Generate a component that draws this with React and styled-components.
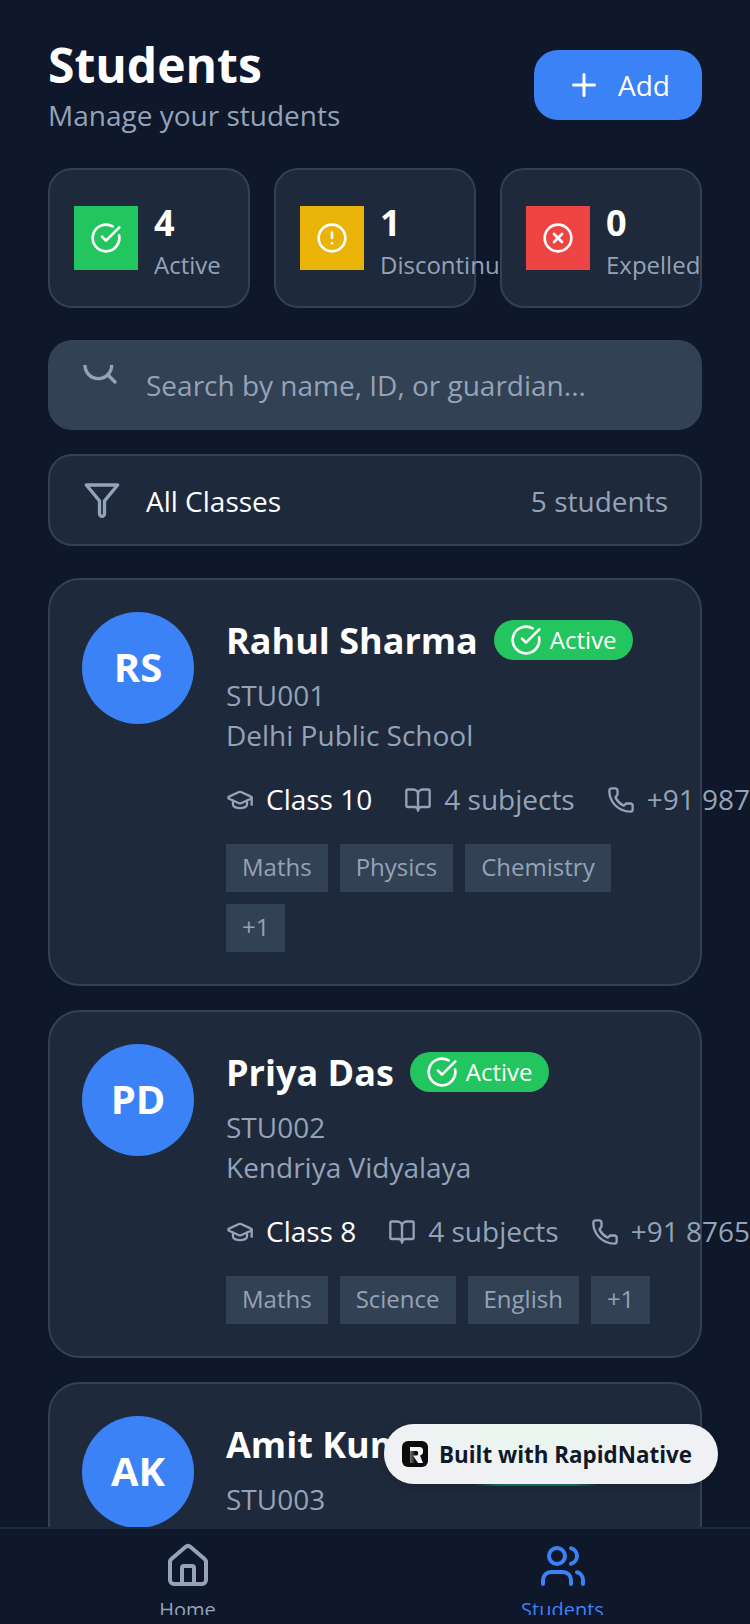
import React from "react";
import styled, { createGlobalStyle } from "styled-components";
import {
  BookOpen,
  CircleAlert,
  CircleCheckBig,
  CircleX,
  GraduationCap,
  House,
  Phone,
  Plus,
  Search,
  Users
} from "lucide-react";

const GlobalStyle = createGlobalStyle`
  html, body {
    margin: 0;
    padding: 0;
    background: #0f172a;
  }
  * {
    box-sizing: border-box;
  }
`;

const stats = [
  { count: 4, label: "Active", color: "#22c55e", Icon: CircleCheckBig },
  { count: 1, label: "Discontinued", color: "#eab308", Icon: CircleAlert },
  { count: 0, label: "Expelled", color: "#ef4444", Icon: CircleX }
];

const students = [
  {
    initials: "RS",
    name: "Rahul Sharma",
    id: "STU001",
    school: "Delhi Public School",
    grade: "Class 10",
    phone: "+91 98765 43210",
    tags: ["Maths", "Physics", "Chemistry", "+1"]
  },
  {
    initials: "PD",
    name: "Priya Das",
    id: "STU002",
    school: "Kendriya Vidyalaya",
    grade: "Class 8",
    phone: "+91 87654 32109",
    tags: ["Maths", "Science", "English", "+1"]
  },
  {
    initials: "AK",
    name: "Amit Kumar",
    id: "STU003",
    school: "St. Xavier's School",
    grade: "Class 12",
    phone: "+91 76543 21098",
    tags: ["Maths", "Physics", "Biology", "+1"]
  }
];

// lucide's funnel has a lopsided stem, the one in the design is symmetric
const FunnelIcon = () => (
  <svg
    width="40"
    height="40"
    viewBox="0 0 24 24"
    fill="none"
    stroke="#94a3b8"
    strokeWidth="2"
    strokeLinejoin="round"
  >
    <path d="M2.6 3H21.4L13.5 12.5V20.3a1.5 1.5 0 0 1-3 0V12.5Z" />
  </svg>
);

const RapidLogo = () => (
  <BadgeLogo viewBox="0 0 26 26">
    <defs>
      <linearGradient id="rapidStem" x1="0" y1="0" x2="1" y2="0">
        <stop offset="0" stopColor="#777" />
        <stop offset="1" stopColor="#111" />
      </linearGradient>
    </defs>
    <rect width="26" height="26" rx="6" fill="#0b0b0b" />
    <rect x="8" y="10" width="5" height="12" fill="url(#rapidStem)" />
    <path
      d="M8 6h9.5A3.5 3.5 0 0 1 21 9.5V11a3.5 3.5 0 0 1-3 3.4L21 22h-5l-5-7.5h3.5a1.6 1.6 0 0 0 1.6-1.6v-1.3a1.6 1.6 0 0 0-1.6-1.6H8Z"
      fill="#f4f4f5"
    />
  </BadgeLogo>
);

export default function App() {
  return (
    <Screen>
      <GlobalStyle />
      <Content>
        <Header>
          <div>
            <Title>Students</Title>
            <Subtitle>Manage your students</Subtitle>
          </div>
          <AddButton>
            <Plus size={36} strokeWidth={2} />
            Add
          </AddButton>
        </Header>

        <StatsRow>
          {stats.map(({ count, label, color, Icon }) => (
            <StatCard key={label}>
              <StatIcon $color={color}>
                <Icon size={32} color="#fff" strokeWidth={2} />
              </StatIcon>
              <StatText>
                <StatCount>{count}</StatCount>
                <StatLabel>{label}</StatLabel>
              </StatText>
            </StatCard>
          ))}
        </StatsRow>

        <SearchBox>
          <SearchIconClip>
            <Search size={40} color="#94a3b8" strokeWidth={2} />
          </SearchIconClip>
          <SearchInput placeholder="Search by name, ID, or guardian..." />
        </SearchBox>

        <FilterBar>
          <FunnelIcon />
          <FilterLabel>All Classes</FilterLabel>
          <FilterCount>5 students</FilterCount>
        </FilterBar>

        {students.map(s => (
          <Card key={s.id}>
            <Avatar>{s.initials}</Avatar>
            <CardBody>
              <NameRow>
                <Name>{s.name}</Name>
                <StatusPill>
                  <CircleCheckBig size={32} color="#fff" strokeWidth={2} />
                  Active
                </StatusPill>
              </NameRow>
              <Muted>{s.id}</Muted>
              <Muted>{s.school}</Muted>
              <InfoRow>
                <InfoItem>
                  <GraduationCap size={28} color="#94a3b8" strokeWidth={2} />
                  <InfoText $light>{s.grade}</InfoText>
                </InfoItem>
                <InfoItem>
                  <BookOpen size={28} color="#94a3b8" strokeWidth={2} />
                  <InfoText>4 subjects</InfoText>
                </InfoItem>
                <InfoItem>
                  <Phone size={28} color="#94a3b8" strokeWidth={2} />
                  <InfoText>{s.phone}</InfoText>
                </InfoItem>
              </InfoRow>
              <TagRow>
                {s.tags.map(tag => (
                  <Tag key={tag}>{tag}</Tag>
                ))}
              </TagRow>
            </CardBody>
          </Card>
        ))}
      </Content>

      <BuiltBadge>
        <RapidLogo />
        Built with RapidNative
      </BuiltBadge>

      <TabBar>
        <Tab>
          <House size={48} strokeWidth={2} />
          <TabLabel>Home</TabLabel>
        </Tab>
        <Tab $active>
          <Users size={48} strokeWidth={2} />
          <TabLabel>Students</TabLabel>
        </Tab>
      </TabBar>
    </Screen>
  );
}

const Screen = styled.div`
  position: relative;
  display: flex;
  flex-direction: column;
  width: 750px;
  height: 1624px;
  overflow: hidden;
  background: #0f172a;
  font-family: "Open Sans", "Liberation Sans", sans-serif;
`;

const Content = styled.main`
  flex: 1;
  min-height: 0;
  overflow: hidden;
  padding: 35px 48px 0;
`;

const Header = styled.header`
  display: flex;
  align-items: center;
  justify-content: space-between;
`;

const Title = styled.h1`
  margin: 0;
  font-size: 48px;
  line-height: 60px;
  font-weight: 700;
  color: #fff;
`;

const Subtitle = styled.p`
  margin: 1px 0 0;
  font-size: 28px;
  line-height: 39px;
  color: #94a3b8;
`;

const AddButton = styled.button`
  display: flex;
  align-items: center;
  gap: 16px;
  height: 70px;
  padding: 0 32px;
  border: 0;
  border-radius: 24px;
  background: #3b82f6;
  color: #fff;
  font: 400 28px "Open Sans", sans-serif;
`;

const StatsRow = styled.section`
  display: flex;
  gap: 24px;
  margin-top: 33px;
`;

const StatCard = styled.div`
  position: relative;
  flex: 1;
  min-width: 0;
  display: flex;
  align-items: center;
  gap: 16px;
  height: 140px;
  padding: 0 24px;
  background: #1e293b;
  border: 2px solid #334155;
  border-radius: 24px;
  white-space: nowrap;
`;

const StatIcon = styled.div`
  flex: none;
  display: flex;
  align-items: center;
  justify-content: center;
  width: 64px;
  height: 64px;
  background: ${p => p.$color};
`;

const StatText = styled.div`
  padding-top: 4px;
`;

const StatCount = styled.div`
  margin-bottom: 2px;
  font-size: 36px;
  line-height: 48px;
  font-weight: 700;
  color: #fff;
`;

const StatLabel = styled.div`
  font-size: 24px;
  line-height: 32px;
  color: #94a3b8;
`;

const SearchBox = styled.div`
  display: flex;
  gap: 26px;
  height: 90px;
  margin-top: 32px;
  padding: 0 32px;
  background: #334155;
  border-radius: 24px;
`;

const SearchIconClip = styled.div`
  flex: none;
  width: 40px;
  height: 22px;
  margin-top: 25px;
  overflow: hidden;

  svg {
    display: block;
    margin-top: -18px;
  }
`;

const SearchInput = styled.input`
  flex: 1;
  min-width: 0;
  border: 0;
  padding: 0;
  outline: none;
  background: transparent;
  color: #fff;
  font: 400 28px "Open Sans", sans-serif;

  &::placeholder {
    color: #94a3b8;
    opacity: 1;
  }
`;

const FilterBar = styled.div`
  display: flex;
  align-items: center;
  gap: 24px;
  height: 92px;
  margin-top: 24px;
  padding: 0 32px;
  background: #1e293b;
  border: 2px solid #334155;
  border-radius: 24px;
`;

const FilterLabel = styled.span`
  flex: 1;
  margin-top: 2px;
  font-size: 28px;
  color: #fff;
`;

const FilterCount = styled.span`
  margin-top: 2px;
  font-size: 28px;
  color: #94a3b8;
`;

const Card = styled.article`
  display: flex;
  align-items: flex-start;
  gap: 32px;
  margin-top: 32px;
  padding: 32px;
  background: #1e293b;
  border: 2px solid #334155;
  border-radius: 32px;

  & + & {
    margin-top: 24px;
  }
`;

const Avatar = styled.div`
  flex: none;
  display: flex;
  align-items: center;
  justify-content: center;
  width: 112px;
  height: 112px;
  padding-bottom: 4px;
  border-radius: 50%;
  background: #3b82f6;
  color: #fff;
  font-size: 40px;
  font-weight: 700;
`;

const CardBody = styled.div`
  flex: 1;
  min-width: 0;
`;

const NameRow = styled.div`
  display: flex;
  align-items: center;
  gap: 16px;
  height: 55px;
  margin-bottom: 8px;
`;

const Name = styled.h2`
  margin: 2px 0 0;
  font-size: 36px;
  font-weight: 700;
  color: #fff;
  white-space: nowrap;
`;

const StatusPill = styled.span`
  display: flex;
  align-items: center;
  gap: 8px;
  height: 40px;
  padding: 0 16px;
  border-radius: 20px;
  background: #22c55e;
  color: #fff;
  font-size: 24px;
`;

const Muted = styled.div`
  font-size: 28px;
  line-height: 40px;
  color: #94a3b8;
`;

const InfoRow = styled.div`
  display: flex;
  align-items: center;
  gap: 32px;
  height: 40px;
  margin-top: 25px;
  white-space: nowrap;
`;

const InfoItem = styled.div`
  flex: none;
  display: flex;
  align-items: center;
  gap: 12px;
`;

const InfoText = styled.span`
  padding-bottom: 2px;
  font-size: 28px;
  color: ${p => (p.$light ? "#fff" : "#94a3b8")};
`;

const TagRow = styled.div`
  display: flex;
  flex-wrap: wrap;
  gap: 12px;
  margin-top: 24px;
`;

const Tag = styled.span`
  display: flex;
  align-items: center;
  height: 48px;
  padding: 0 16px 3px;
  background: #334155;
  color: #94a3b8;
  font-size: 24px;
`;

const BuiltBadge = styled.div`
  position: absolute;
  left: 384px;
  top: 1424px;
  display: flex;
  align-items: center;
  gap: 11px;
  width: 334px;
  height: 60px;
  padding-left: 18px;
  border-radius: 30px;
  background: radial-gradient(ellipse 150px 50px at 46% 0, #e8f8ee, rgba(232, 248, 238, 0) 100%), #f0f1f4;
  box-shadow: 0 2px 8px rgba(0, 0, 0, 0.2);
  color: #111827;
  font-size: 22.4px;
  font-weight: 700;

  &::after {
    content: "";
    position: absolute;
    left: 90px;
    bottom: -2px;
    width: 125px;
    height: 2px;
    background: linear-gradient(90deg, rgba(15, 107, 78, 0), #0f6b4e 20%, #0f6b4e 80%, rgba(15, 107, 78, 0));
  }
`;

const BadgeLogo = styled.svg`
  flex: none;
  width: 26px;
  height: 26px;
`;

const TabBar = styled.nav`
  flex: none;
  display: flex;
  height: 97px;
  background: #0f172a;
  border-top: 2px solid #1e293b;
`;

const Tab = styled.div`
  flex: 1;
  display: flex;
  flex-direction: column;
  align-items: center;
  height: 86px;
  padding-top: 13px;
  overflow: hidden;
  color: ${p => (p.$active ? "#3b82f6" : "#94a3b8")};

  svg {
    flex: none;
  }
`;

const TabLabel = styled.span`
  flex: none;
  margin-top: 6px;
  font-size: 20px;
  line-height: 28px;
`;
